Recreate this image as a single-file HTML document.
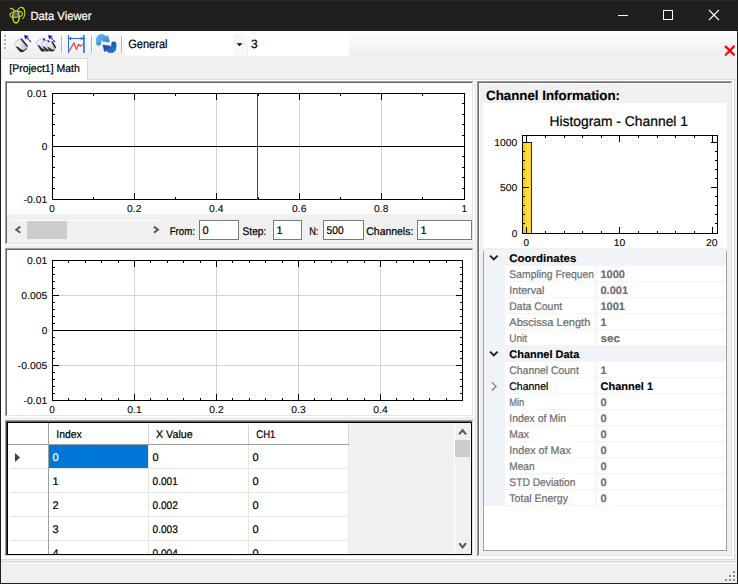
<!DOCTYPE html>
<html><head><meta charset="utf-8"><title>Data Viewer</title>
<style>
html,body{margin:0;padding:0;background:#F0F0F0;overflow:hidden;}
body{width:738px;height:584px;font-family:"Liberation Sans",sans-serif;}
svg{display:block;position:absolute;left:0;top:0;}
svg path, svg ellipse, svg circle, svg g[transform] rect{shape-rendering:geometricPrecision;}
</style></head><body>
<svg width="738" height="584" viewBox="0 0 738 584" shape-rendering="crispEdges" text-rendering="geometricPrecision" font-family="Liberation Sans, sans-serif">
<rect x="0" y="0" width="738" height="584" fill="#F0F0F0" />
<rect x="0" y="0" width="738" height="31" fill="#201F1E" />
<rect x="0" y="0" width="738" height="1" fill="#2B2A29" />
<rect x="0" y="0" width="1" height="584" fill="#201F1E" />
<rect x="737" y="0" width="1" height="584" fill="#201F1E" />
<rect x="0" y="583" width="738" height="1" fill="#201F1E" />
<g fill="none" stroke="#C4D21A" stroke-width="1.1" stroke-linecap="round">
<ellipse cx="16" cy="17" rx="3.2" ry="6.0" stroke-width="1.6" stroke="#C8D61C"/>
<ellipse cx="16.2" cy="14.4" rx="6.3" ry="2.9" transform="rotate(-6 16.2 14.4)"/>
<path d="M10.4 8.4 Q13.6 8.6 14.8 11.6"/>
<path d="M17.6 11.2 C18 6.6 23.4 6 24.5 10.4 C25.2 13.8 24.2 17 22.8 18.6"/>
</g><rect x="14.6" y="13.4" width="3" height="3" fill="#3B34F2" stroke="#9490E4" stroke-width="0.5"/>
<text x="30.5" y="20" font-size="12" fill="#FFFFFF" stroke="#FFFFFF" stroke-width="0.22" text-anchor="start" font-weight="normal"  textLength="61" lengthAdjust="spacingAndGlyphs">Data Viewer</text>
<rect x="618" y="15" width="10" height="1" fill="#FFFFFF" />
<rect x="663.5" y="10.5" width="9" height="9" fill="none" stroke="#FFFFFF" stroke-width="1"/>
<path d="M709 10 L719 20 M719 10 L709 20" stroke="#FFFFFF" stroke-width="1.1" fill="none"/>
<defs><linearGradient id="tb" x1="0" y1="0" x2="0" y2="1"><stop offset="0" stop-color="#FDFDFD"/><stop offset="0.5" stop-color="#F6F6F6"/><stop offset="1" stop-color="#EEEEEE"/></linearGradient></defs>
<rect x="1" y="31" width="736" height="26" fill="url(#tb)" />
<rect x="5" y="36" width="2" height="2" fill="#FFFFFF" />
<rect x="4" y="35" width="2" height="2" fill="#B2B2B2" />
<rect x="5" y="40" width="2" height="2" fill="#FFFFFF" />
<rect x="4" y="39" width="2" height="2" fill="#B2B2B2" />
<rect x="5" y="44" width="2" height="2" fill="#FFFFFF" />
<rect x="4" y="43" width="2" height="2" fill="#B2B2B2" />
<rect x="5" y="48" width="2" height="2" fill="#FFFFFF" />
<rect x="4" y="47" width="2" height="2" fill="#B2B2B2" />
<rect x="61" y="36" width="1" height="17" fill="#B4B4B4" />
<rect x="62" y="36" width="1" height="17" fill="#FCFCFC" />
<rect x="91" y="36" width="1" height="17" fill="#B4B4B4" />
<rect x="92" y="36" width="1" height="17" fill="#FCFCFC" />
<rect x="121" y="36" width="1" height="17" fill="#B4B4B4" />
<rect x="122" y="36" width="1" height="17" fill="#FCFCFC" />
<defs><linearGradient id="pad" x1="0" y1="0" x2="1" y2="1"><stop offset="0" stop-color="#FFFFFF"/><stop offset="0.45" stop-color="#E6E9EB"/><stop offset="1" stop-color="#A8AEB6"/></linearGradient></defs>
<g transform="translate(20.9 45.5) rotate(-40)"><rect x="-4.6" y="-6.0" width="9.2" height="12.0" rx="2.5" fill="url(#pad)" stroke="#B8B2EE" stroke-width="0.8"/><path d="M2.6999999999999997 6.0 L-2.0999999999999996 6.0" fill="none" stroke="#3E3E50" stroke-width="1.15"/><path d="M4.5 -4.4 L4.5 4.3" fill="none" stroke="#2C2C32" stroke-width="1.6" stroke-linecap="round"/><path d="M-4.699999999999999 -2.4 L-4.699999999999999 3.5 Q-4.699999999999999 6.2 -2.0999999999999996 6.2 L-0.5999999999999996 6.2 Q-2.8 3.0 -3.3 -1.4000000000000004 z" fill="#2E2E34"/></g>
<path d="M27.0 37.9 L31.0 41.9" stroke="#1010F0" stroke-width="1.15" stroke-dasharray="2.4 0.7" fill="none"/><path d="M24.099999999999998 35.0 l4.5 1.0 l-3.4 3.4 z" fill="#1010F0"/>
<g transform="translate(42.5 44.9) rotate(-31)"><rect x="-4.3" y="-6.0" width="8.6" height="12.0" rx="2.5" fill="url(#pad)" stroke="#B8B2EE" stroke-width="0.8"/><path d="M2.4 6.0 L-1.7999999999999998 6.0" fill="none" stroke="#3E3E50" stroke-width="1.15"/><path d="M4.2 -4.4 L4.2 4.3" fill="none" stroke="#2C2C32" stroke-width="1.6" stroke-linecap="round"/><path d="M-4.3999999999999995 -2.4 L-4.3999999999999995 3.5 Q-4.3999999999999995 6.2 -1.7999999999999998 6.2 L-0.2999999999999998 6.2 Q-2.5 3.0 -3.0 -1.4000000000000004 z" fill="#2E2E34"/></g>
<g transform="translate(46.9 45.75) rotate(-30)"><rect x="-3.8" y="-5.2" width="7.6" height="10.4" rx="2.5" fill="url(#pad)" stroke="#B8B2EE" stroke-width="0.8"/><path d="M1.9 5.2 L-1.2999999999999998 5.2" fill="none" stroke="#3E3E50" stroke-width="1.15"/><path d="M3.6999999999999997 -3.6 L3.6999999999999997 3.5" fill="none" stroke="#2C2C32" stroke-width="1.6" stroke-linecap="round"/><path d="M-3.9 -1.6 L-3.9 2.7 Q-3.9 5.4 -1.2999999999999998 5.4 L0.20000000000000018 5.4 Q-1.9999999999999998 2.2 -2.5 -0.6000000000000005 z" fill="#2E2E34"/></g>
<g transform="translate(51.0 46.4) rotate(-30)"><rect x="-3.4" y="-4.7" width="6.8" height="9.4" rx="2.5" fill="url(#pad)" stroke="#B8B2EE" stroke-width="0.8"/><path d="M1.5 4.7 L-0.8999999999999999 4.7" fill="none" stroke="#3E3E50" stroke-width="1.15"/><path d="M3.3 -3.1 L3.3 3.0" fill="none" stroke="#2C2C32" stroke-width="1.6" stroke-linecap="round"/><path d="M-3.5 -1.1 L-3.5 2.2 Q-3.5 4.9 -0.8999999999999999 4.9 L0.6000000000000001 4.9 Q-1.5999999999999999 1.7000000000000002 -2.0999999999999996 -0.10000000000000053 z" fill="#2E2E34"/></g>
<path d="M51.0 37.9 L55.0 41.9" stroke="#1010F0" stroke-width="1.15" stroke-dasharray="2.4 0.7" fill="none"/><path d="M48.1 35.0 l4.5 1.0 l-3.4 3.4 z" fill="#1010F0"/>
<rect x="68" y="35" width="1" height="18" fill="#1E6CF0" />
<rect x="83" y="35" width="1" height="18" fill="#2F78F2" />
<rect x="84" y="35" width="1" height="18" fill="#5A98F6" />
<rect x="68" y="38" width="17" height="1" fill="#1E6CF0" />
<path d="M68.6 38.5 l2.6 -2 v4 z M83.4 38.5 l-2.6 -2 v4 z" fill="#1E6CF0"/>
<path d="M68.8 51.7 L74 42.7 L76.2 49.3 L78.7 44.3 L80.3 46.2 L82.6 44.3" stroke="#FF2626" stroke-width="1.1" fill="none" stroke-linejoin="round"/>
<defs><linearGradient id="ra" x1="0" y1="0" x2="1" y2="1"><stop offset="0" stop-color="#6FC0FA"/><stop offset="1" stop-color="#1E78D8"/></linearGradient>
<linearGradient id="rb" x1="0" y1="0" x2="1" y2="1"><stop offset="0" stop-color="#2C84DC"/><stop offset="1" stop-color="#0C3C9A"/></linearGradient></defs>
<path d="M96.3 43.4 Q96.3 45.5 98.6 45.5 Q100.9 45.5 100.9 43.4 L100.9 41.2 Q101 39.7 102.4 39.9 L102.2 41.3 L109.6 42.2 L107.8 35.2 L106.4 36.7 Q103.6 33.8 100 34.5 Q96.3 35.6 96.3 40 Z" fill="url(#ra)" stroke="#3C90E0" stroke-width="0.4"/>
<path d="M96.3 43.4 Q96.3 45.5 98.6 45.5 Q100.9 45.5 100.9 43.4 L100.9 41.2 Q101 39.7 102.4 39.9 L102.2 41.3 L109.6 42.2 L107.8 35.2 L106.4 36.7 Q103.6 33.8 100 34.5 Q96.3 35.6 96.3 40 Z" fill="url(#rb)" stroke="#0E3C96" stroke-width="0.4" transform="rotate(180 106.2 43.6)"/>
<rect x="125" y="32" width="121" height="24" fill="#FFFFFF" />
<rect x="234" y="34" width="11" height="21" fill="#F7F7F7" />
<path d="M236.5 43.2 h6 l-3 3 z" fill="#000"/>
<text x="128.3" y="47.5" font-size="12" fill="#000" stroke="#000" stroke-width="0.22" text-anchor="start" font-weight="normal"  textLength="39.2" lengthAdjust="spacingAndGlyphs">General</text>
<rect x="248" y="33" width="101" height="23" fill="#FFFFFF" />
<text x="251" y="47.5" font-size="12" fill="#000" stroke="#000" stroke-width="0.22" text-anchor="start" font-weight="normal" >3</text>
<rect x="721" y="43" width="15" height="15" fill="#F0F0F0" />
<rect x="736" y="31" width="1" height="27" fill="#FCFCFC" />
<path d="M725.7 46.6 L733.9 54.6 M733.9 46.4 L725.8 54.8" stroke="#F21624" stroke-width="2.3" fill="none" stroke-linecap="round"/>
<path d="M726 46.8 L733.6 54.3 M733.6 46.8 L730.4 50.2" stroke="#9C0008" stroke-width="0.8" fill="none"/>
<rect x="88" y="79" width="647" height="1" fill="#DCDCDC" />
<rect x="1" y="80" width="733" height="479" fill="#FFFFFF" />
<rect x="2" y="559" width="733" height="1" fill="#DADADA" />
<rect x="734" y="79" width="1" height="481" fill="#DADADA" />
<rect x="2" y="58" width="86" height="22" fill="#FFFFFF" />
<rect x="2" y="58" width="86" height="1" fill="#D9D9D9" />
<rect x="87" y="58" width="1" height="22" fill="#D9D9D9" />
<text x="9.3" y="72" font-size="11" fill="#000" stroke="#000" stroke-width="0.22" text-anchor="start" font-weight="normal"  textLength="70.5" lengthAdjust="spacingAndGlyphs">[Project1] Math</text>
<rect x="1" y="561" width="735" height="1" fill="#D7D7D7" />
<rect x="733" y="571" width="2" height="2" fill="#8E8E8E" />
<rect x="729" y="575" width="2" height="2" fill="#8E8E8E" />
<rect x="733" y="575" width="2" height="2" fill="#8E8E8E" />
<rect x="725" y="579" width="2" height="2" fill="#8E8E8E" />
<rect x="729" y="579" width="2" height="2" fill="#8E8E8E" />
<rect x="733" y="579" width="2" height="2" fill="#8E8E8E" />
<rect x="5" y="81" width="728" height="476" fill="#F0F0F0" />
<rect x="5" y="81" width="469" height="164" fill="#FFFFFF" />
<rect x="5" y="81" width="469" height="1" fill="#A0A0A0" />
<rect x="5" y="81" width="1" height="164" fill="#A0A0A0" />
<rect x="6" y="82" width="467" height="1" fill="#696969" />
<rect x="6" y="82" width="1" height="162" fill="#696969" />
<rect x="5" y="244" width="469" height="1" fill="#FFFFFF" />
<rect x="473" y="81" width="1" height="164" fill="#FFFFFF" />
<rect x="6" y="243" width="467" height="1" fill="#E3E3E3" />
<rect x="472" y="82" width="1" height="162" fill="#E3E3E3" />
<rect x="7" y="214" width="465" height="29" fill="#F0F0F0" />
<rect x="134" y="93" width="1" height="107" fill="#D3D3D3" />
<rect x="216" y="93" width="1" height="107" fill="#D3D3D3" />
<rect x="299" y="93" width="1" height="107" fill="#D3D3D3" />
<rect x="381" y="93" width="1" height="107" fill="#D3D3D3" />
<rect x="93" y="93" width="1" height="3" fill="#000" />
<rect x="93" y="197" width="1" height="3" fill="#000" />
<rect x="175" y="93" width="1" height="3" fill="#000" />
<rect x="175" y="197" width="1" height="3" fill="#000" />
<rect x="258" y="93" width="1" height="3" fill="#000" />
<rect x="258" y="197" width="1" height="3" fill="#000" />
<rect x="340" y="93" width="1" height="3" fill="#000" />
<rect x="340" y="197" width="1" height="3" fill="#000" />
<rect x="422" y="93" width="1" height="3" fill="#000" />
<rect x="422" y="197" width="1" height="3" fill="#000" />
<rect x="52" y="93" width="1" height="7" fill="#000" />
<rect x="52" y="193" width="1" height="7" fill="#000" />
<rect x="134" y="93" width="1" height="7" fill="#000" />
<rect x="134" y="193" width="1" height="7" fill="#000" />
<rect x="216" y="93" width="1" height="7" fill="#000" />
<rect x="216" y="193" width="1" height="7" fill="#000" />
<rect x="299" y="93" width="1" height="7" fill="#000" />
<rect x="299" y="193" width="1" height="7" fill="#000" />
<rect x="381" y="93" width="1" height="7" fill="#000" />
<rect x="381" y="193" width="1" height="7" fill="#000" />
<rect x="464" y="93" width="1" height="7" fill="#000" />
<rect x="464" y="193" width="1" height="7" fill="#000" />
<rect x="52" y="93" width="3" height="1" fill="#000" />
<rect x="462" y="93" width="3" height="1" fill="#000" />
<rect x="52" y="103" width="3" height="1" fill="#000" />
<rect x="462" y="103" width="3" height="1" fill="#000" />
<rect x="52" y="114" width="3" height="1" fill="#000" />
<rect x="462" y="114" width="3" height="1" fill="#000" />
<rect x="52" y="124" width="3" height="1" fill="#000" />
<rect x="462" y="124" width="3" height="1" fill="#000" />
<rect x="52" y="135" width="3" height="1" fill="#000" />
<rect x="462" y="135" width="3" height="1" fill="#000" />
<rect x="52" y="146" width="3" height="1" fill="#000" />
<rect x="462" y="146" width="3" height="1" fill="#000" />
<rect x="52" y="156" width="3" height="1" fill="#000" />
<rect x="462" y="156" width="3" height="1" fill="#000" />
<rect x="52" y="167" width="3" height="1" fill="#000" />
<rect x="462" y="167" width="3" height="1" fill="#000" />
<rect x="52" y="177" width="3" height="1" fill="#000" />
<rect x="462" y="177" width="3" height="1" fill="#000" />
<rect x="52" y="188" width="3" height="1" fill="#000" />
<rect x="462" y="188" width="3" height="1" fill="#000" />
<rect x="52" y="199" width="3" height="1" fill="#000" />
<rect x="462" y="199" width="3" height="1" fill="#000" />
<rect x="52" y="146" width="7" height="1" fill="#000" />
<rect x="458" y="146" width="7" height="1" fill="#000" />
<rect x="52" y="93" width="413" height="1" fill="#000" />
<rect x="52" y="199" width="413" height="1" fill="#000" />
<rect x="52" y="93" width="1" height="107" fill="#000" />
<rect x="464" y="93" width="1" height="107" fill="#000" />
<rect x="52" y="146" width="413" height="1" fill="#000" />
<rect x="257" y="93" width="1" height="107" fill="#F00000" />
<text x="47.2" y="97" font-size="10" fill="#000" stroke="#000" stroke-width="0.1" text-anchor="end" font-weight="normal"  textLength="20.14" lengthAdjust="spacingAndGlyphs">0.01</text>
<text x="47.2" y="150" font-size="10" fill="#000" stroke="#000" stroke-width="0.1" text-anchor="end" font-weight="normal" >0</text>
<text x="47.2" y="203" font-size="10" fill="#000" stroke="#000" stroke-width="0.1" text-anchor="end" font-weight="normal"  textLength="23.59" lengthAdjust="spacingAndGlyphs">-0.01</text>
<text x="52" y="212" font-size="10" fill="#000" stroke="#000" stroke-width="0.1" text-anchor="middle" font-weight="normal" >0</text>
<text x="134.3" y="212" font-size="10" fill="#000" stroke="#000" stroke-width="0.1" text-anchor="middle" font-weight="normal"  textLength="14.39" lengthAdjust="spacingAndGlyphs">0.2</text>
<text x="216.3" y="212" font-size="10" fill="#000" stroke="#000" stroke-width="0.1" text-anchor="middle" font-weight="normal"  textLength="14.39" lengthAdjust="spacingAndGlyphs">0.4</text>
<text x="299.3" y="212" font-size="10" fill="#000" stroke="#000" stroke-width="0.1" text-anchor="middle" font-weight="normal"  textLength="14.39" lengthAdjust="spacingAndGlyphs">0.6</text>
<text x="381.3" y="212" font-size="10" fill="#000" stroke="#000" stroke-width="0.1" text-anchor="middle" font-weight="normal"  textLength="14.39" lengthAdjust="spacingAndGlyphs">0.8</text>
<text x="464.3" y="212" font-size="10" fill="#000" stroke="#000" stroke-width="0.1" text-anchor="middle" font-weight="normal" >1</text>
<rect x="10" y="220" width="154" height="1" fill="#FFFFFF" />
<rect x="27" y="221" width="40" height="18" fill="#CDCDCD" />
<path d="M20.3 226.6 L16.3 229.7 L20.3 232.8" stroke="#5A5A5A" stroke-width="2.0" fill="none"/>
<path d="M153.9 226.6 L157.9 229.7 L153.9 232.8" stroke="#5A5A5A" stroke-width="2.0" fill="none"/>
<text x="169.7" y="235" font-size="11" fill="#000" stroke="#000" stroke-width="0.22" text-anchor="start" font-weight="normal"  textLength="25.3" lengthAdjust="spacingAndGlyphs">From:</text>
<rect x="199" y="220" width="40" height="20" fill="#7A7A7A" />
<rect x="200" y="221" width="38" height="18" fill="#FFFFFF" />
<text x="202.6" y="234" font-size="11" fill="#000" stroke="#000" stroke-width="0.22" text-anchor="start" font-weight="normal" >0</text>
<text x="242.5" y="235" font-size="11" fill="#000" stroke="#000" stroke-width="0.22" text-anchor="start" font-weight="normal"  textLength="23.8" lengthAdjust="spacingAndGlyphs">Step:</text>
<rect x="273" y="220" width="29" height="20" fill="#7A7A7A" />
<rect x="274" y="221" width="27" height="18" fill="#FFFFFF" />
<text x="276.6" y="234" font-size="11" fill="#000" stroke="#000" stroke-width="0.22" text-anchor="start" font-weight="normal" >1</text>
<text x="309.2" y="235" font-size="11" fill="#000" stroke="#000" stroke-width="0.22" text-anchor="start" font-weight="normal"  textLength="9.2" lengthAdjust="spacingAndGlyphs">N:</text>
<rect x="323" y="220" width="41" height="20" fill="#7A7A7A" />
<rect x="324" y="221" width="39" height="18" fill="#FFFFFF" />
<text x="326.6" y="234" font-size="11" fill="#000" stroke="#000" stroke-width="0.22" text-anchor="start" font-weight="normal"  textLength="17" lengthAdjust="spacingAndGlyphs">500</text>
<text x="366.3" y="235" font-size="11" fill="#000" stroke="#000" stroke-width="0.22" text-anchor="start" font-weight="normal"  textLength="47" lengthAdjust="spacingAndGlyphs">Channels:</text>
<rect x="417" y="220" width="55" height="20" fill="#7A7A7A" />
<rect x="418" y="221" width="53" height="18" fill="#FFFFFF" />
<text x="420.6" y="234" font-size="11" fill="#000" stroke="#000" stroke-width="0.22" text-anchor="start" font-weight="normal" >1</text>
<rect x="5" y="248" width="469" height="169" fill="#FFFFFF" />
<rect x="5" y="248" width="469" height="1" fill="#A0A0A0" />
<rect x="5" y="248" width="1" height="169" fill="#A0A0A0" />
<rect x="6" y="249" width="467" height="1" fill="#696969" />
<rect x="6" y="249" width="1" height="167" fill="#696969" />
<rect x="5" y="416" width="469" height="1" fill="#FFFFFF" />
<rect x="473" y="248" width="1" height="169" fill="#FFFFFF" />
<rect x="6" y="415" width="467" height="1" fill="#E3E3E3" />
<rect x="472" y="249" width="1" height="167" fill="#E3E3E3" />
<rect x="134" y="260" width="1" height="141" fill="#D3D3D3" />
<rect x="216" y="260" width="1" height="141" fill="#D3D3D3" />
<rect x="298" y="260" width="1" height="141" fill="#D3D3D3" />
<rect x="380" y="260" width="1" height="141" fill="#D3D3D3" />
<rect x="52" y="295" width="411" height="1" fill="#D3D3D3" />
<rect x="52" y="365" width="411" height="1" fill="#D3D3D3" />
<rect x="52" y="260" width="1" height="3" fill="#000" />
<rect x="52" y="398" width="1" height="3" fill="#000" />
<rect x="68" y="260" width="1" height="3" fill="#000" />
<rect x="68" y="398" width="1" height="3" fill="#000" />
<rect x="85" y="260" width="1" height="3" fill="#000" />
<rect x="85" y="398" width="1" height="3" fill="#000" />
<rect x="101" y="260" width="1" height="3" fill="#000" />
<rect x="101" y="398" width="1" height="3" fill="#000" />
<rect x="118" y="260" width="1" height="3" fill="#000" />
<rect x="118" y="398" width="1" height="3" fill="#000" />
<rect x="134" y="260" width="1" height="3" fill="#000" />
<rect x="134" y="398" width="1" height="3" fill="#000" />
<rect x="150" y="260" width="1" height="3" fill="#000" />
<rect x="150" y="398" width="1" height="3" fill="#000" />
<rect x="167" y="260" width="1" height="3" fill="#000" />
<rect x="167" y="398" width="1" height="3" fill="#000" />
<rect x="183" y="260" width="1" height="3" fill="#000" />
<rect x="183" y="398" width="1" height="3" fill="#000" />
<rect x="200" y="260" width="1" height="3" fill="#000" />
<rect x="200" y="398" width="1" height="3" fill="#000" />
<rect x="216" y="260" width="1" height="3" fill="#000" />
<rect x="216" y="398" width="1" height="3" fill="#000" />
<rect x="232" y="260" width="1" height="3" fill="#000" />
<rect x="232" y="398" width="1" height="3" fill="#000" />
<rect x="249" y="260" width="1" height="3" fill="#000" />
<rect x="249" y="398" width="1" height="3" fill="#000" />
<rect x="265" y="260" width="1" height="3" fill="#000" />
<rect x="265" y="398" width="1" height="3" fill="#000" />
<rect x="282" y="260" width="1" height="3" fill="#000" />
<rect x="282" y="398" width="1" height="3" fill="#000" />
<rect x="298" y="260" width="1" height="3" fill="#000" />
<rect x="298" y="398" width="1" height="3" fill="#000" />
<rect x="314" y="260" width="1" height="3" fill="#000" />
<rect x="314" y="398" width="1" height="3" fill="#000" />
<rect x="331" y="260" width="1" height="3" fill="#000" />
<rect x="331" y="398" width="1" height="3" fill="#000" />
<rect x="347" y="260" width="1" height="3" fill="#000" />
<rect x="347" y="398" width="1" height="3" fill="#000" />
<rect x="364" y="260" width="1" height="3" fill="#000" />
<rect x="364" y="398" width="1" height="3" fill="#000" />
<rect x="380" y="260" width="1" height="3" fill="#000" />
<rect x="380" y="398" width="1" height="3" fill="#000" />
<rect x="396" y="260" width="1" height="3" fill="#000" />
<rect x="396" y="398" width="1" height="3" fill="#000" />
<rect x="413" y="260" width="1" height="3" fill="#000" />
<rect x="413" y="398" width="1" height="3" fill="#000" />
<rect x="429" y="260" width="1" height="3" fill="#000" />
<rect x="429" y="398" width="1" height="3" fill="#000" />
<rect x="446" y="260" width="1" height="3" fill="#000" />
<rect x="446" y="398" width="1" height="3" fill="#000" />
<rect x="462" y="260" width="1" height="3" fill="#000" />
<rect x="462" y="398" width="1" height="3" fill="#000" />
<rect x="52" y="260" width="1" height="7" fill="#000" />
<rect x="52" y="394" width="1" height="7" fill="#000" />
<rect x="134" y="260" width="1" height="7" fill="#000" />
<rect x="134" y="394" width="1" height="7" fill="#000" />
<rect x="216" y="260" width="1" height="7" fill="#000" />
<rect x="216" y="394" width="1" height="7" fill="#000" />
<rect x="298" y="260" width="1" height="7" fill="#000" />
<rect x="298" y="394" width="1" height="7" fill="#000" />
<rect x="380" y="260" width="1" height="7" fill="#000" />
<rect x="380" y="394" width="1" height="7" fill="#000" />
<rect x="462" y="260" width="1" height="7" fill="#000" />
<rect x="462" y="394" width="1" height="7" fill="#000" />
<rect x="52" y="260" width="3" height="1" fill="#000" />
<rect x="460" y="260" width="3" height="1" fill="#000" />
<rect x="52" y="267" width="3" height="1" fill="#000" />
<rect x="460" y="267" width="3" height="1" fill="#000" />
<rect x="52" y="274" width="3" height="1" fill="#000" />
<rect x="460" y="274" width="3" height="1" fill="#000" />
<rect x="52" y="281" width="3" height="1" fill="#000" />
<rect x="460" y="281" width="3" height="1" fill="#000" />
<rect x="52" y="288" width="3" height="1" fill="#000" />
<rect x="460" y="288" width="3" height="1" fill="#000" />
<rect x="52" y="295" width="3" height="1" fill="#000" />
<rect x="460" y="295" width="3" height="1" fill="#000" />
<rect x="52" y="302" width="3" height="1" fill="#000" />
<rect x="460" y="302" width="3" height="1" fill="#000" />
<rect x="52" y="309" width="3" height="1" fill="#000" />
<rect x="460" y="309" width="3" height="1" fill="#000" />
<rect x="52" y="316" width="3" height="1" fill="#000" />
<rect x="460" y="316" width="3" height="1" fill="#000" />
<rect x="52" y="323" width="3" height="1" fill="#000" />
<rect x="460" y="323" width="3" height="1" fill="#000" />
<rect x="52" y="330" width="3" height="1" fill="#000" />
<rect x="460" y="330" width="3" height="1" fill="#000" />
<rect x="52" y="337" width="3" height="1" fill="#000" />
<rect x="460" y="337" width="3" height="1" fill="#000" />
<rect x="52" y="344" width="3" height="1" fill="#000" />
<rect x="460" y="344" width="3" height="1" fill="#000" />
<rect x="52" y="351" width="3" height="1" fill="#000" />
<rect x="460" y="351" width="3" height="1" fill="#000" />
<rect x="52" y="358" width="3" height="1" fill="#000" />
<rect x="460" y="358" width="3" height="1" fill="#000" />
<rect x="52" y="365" width="3" height="1" fill="#000" />
<rect x="460" y="365" width="3" height="1" fill="#000" />
<rect x="52" y="372" width="3" height="1" fill="#000" />
<rect x="460" y="372" width="3" height="1" fill="#000" />
<rect x="52" y="379" width="3" height="1" fill="#000" />
<rect x="460" y="379" width="3" height="1" fill="#000" />
<rect x="52" y="386" width="3" height="1" fill="#000" />
<rect x="460" y="386" width="3" height="1" fill="#000" />
<rect x="52" y="393" width="3" height="1" fill="#000" />
<rect x="460" y="393" width="3" height="1" fill="#000" />
<rect x="52" y="400" width="3" height="1" fill="#000" />
<rect x="460" y="400" width="3" height="1" fill="#000" />
<rect x="52" y="260" width="7" height="1" fill="#000" />
<rect x="456" y="260" width="7" height="1" fill="#000" />
<rect x="52" y="295" width="7" height="1" fill="#000" />
<rect x="456" y="295" width="7" height="1" fill="#000" />
<rect x="52" y="330" width="7" height="1" fill="#000" />
<rect x="456" y="330" width="7" height="1" fill="#000" />
<rect x="52" y="365" width="7" height="1" fill="#000" />
<rect x="456" y="365" width="7" height="1" fill="#000" />
<rect x="52" y="400" width="7" height="1" fill="#000" />
<rect x="456" y="400" width="7" height="1" fill="#000" />
<rect x="52" y="260" width="411" height="1" fill="#000" />
<rect x="52" y="400" width="411" height="1" fill="#000" />
<rect x="52" y="260" width="1" height="141" fill="#000" />
<rect x="462" y="260" width="1" height="141" fill="#000" />
<rect x="52" y="330" width="411" height="1" fill="#000" />
<text x="47.2" y="264" font-size="10" fill="#000" stroke="#000" stroke-width="0.1" text-anchor="end" font-weight="normal"  textLength="20.14" lengthAdjust="spacingAndGlyphs">0.01</text>
<text x="47.2" y="299" font-size="10" fill="#000" stroke="#000" stroke-width="0.1" text-anchor="end" font-weight="normal"  textLength="25.9" lengthAdjust="spacingAndGlyphs">0.005</text>
<text x="47.2" y="334" font-size="10" fill="#000" stroke="#000" stroke-width="0.1" text-anchor="end" font-weight="normal" >0</text>
<text x="47.2" y="369" font-size="10" fill="#000" stroke="#000" stroke-width="0.1" text-anchor="end" font-weight="normal"  textLength="29.34" lengthAdjust="spacingAndGlyphs">-0.005</text>
<text x="47.2" y="404" font-size="10" fill="#000" stroke="#000" stroke-width="0.1" text-anchor="end" font-weight="normal"  textLength="23.59" lengthAdjust="spacingAndGlyphs">-0.01</text>
<text x="52" y="413" font-size="10" fill="#000" stroke="#000" stroke-width="0.1" text-anchor="middle" font-weight="normal" >0</text>
<text x="134.5" y="413" font-size="10" fill="#000" stroke="#000" stroke-width="0.1" text-anchor="middle" font-weight="normal"  textLength="14.39" lengthAdjust="spacingAndGlyphs">0.1</text>
<text x="216.5" y="413" font-size="10" fill="#000" stroke="#000" stroke-width="0.1" text-anchor="middle" font-weight="normal"  textLength="14.39" lengthAdjust="spacingAndGlyphs">0.2</text>
<text x="298.5" y="413" font-size="10" fill="#000" stroke="#000" stroke-width="0.1" text-anchor="middle" font-weight="normal"  textLength="14.39" lengthAdjust="spacingAndGlyphs">0.3</text>
<text x="380.5" y="413" font-size="10" fill="#000" stroke="#000" stroke-width="0.1" text-anchor="middle" font-weight="normal"  textLength="14.39" lengthAdjust="spacingAndGlyphs">0.4</text>
<rect x="5" y="420" width="469" height="137" fill="#FFFFFF" />
<rect x="5" y="420" width="469" height="1" fill="#A0A0A0" />
<rect x="5" y="420" width="1" height="136" fill="#A0A0A0" />
<rect x="6" y="421" width="467" height="1" fill="#606060" />
<rect x="6" y="421" width="1" height="134" fill="#404040" />
<rect x="7" y="422" width="465" height="1" fill="#000" />
<rect x="7" y="422" width="1" height="133" fill="#000" />
<rect x="7" y="554" width="465" height="1" fill="#000" />
<rect x="471" y="422" width="1" height="133" fill="#000" />
<rect x="6" y="555" width="468" height="1" fill="#E3E3E3" />
<rect x="472" y="421" width="1" height="135" fill="#E3E3E3" />
<rect x="5" y="556" width="469" height="1" fill="#FFFFFF" />
<rect x="473" y="420" width="1" height="137" fill="#FFFFFF" />
<rect x="349" y="423" width="122" height="131" fill="#F0F0F0" />
<rect x="49" y="445" width="99" height="23" fill="#0078D7" />
<rect x="10" y="468" width="339" height="1" fill="#E6E6E6" />
<rect x="10" y="492" width="339" height="1" fill="#E6E6E6" />
<rect x="10" y="516" width="339" height="1" fill="#E6E6E6" />
<rect x="10" y="540" width="339" height="1" fill="#E6E6E6" />
<rect x="148" y="445" width="1" height="109" fill="#E6E6E6" />
<rect x="148" y="425" width="1" height="19" fill="#D4D4D4" />
<rect x="248" y="445" width="1" height="109" fill="#E6E6E6" />
<rect x="248" y="425" width="1" height="19" fill="#D4D4D4" />
<rect x="348" y="445" width="1" height="109" fill="#E6E6E6" />
<rect x="348" y="425" width="1" height="19" fill="#D4D4D4" />
<rect x="48" y="423" width="1" height="131" fill="#A0A0A0" />
<rect x="8" y="444" width="341" height="1" fill="#A0A0A0" />
<text x="56.3" y="438" font-size="11" fill="#000" stroke="#000" stroke-width="0.22" text-anchor="start" font-weight="normal"  textLength="25.4" lengthAdjust="spacingAndGlyphs">Index</text>
<text x="156" y="438" font-size="11" fill="#000" stroke="#000" stroke-width="0.22" text-anchor="start" font-weight="normal"  textLength="36.7" lengthAdjust="spacingAndGlyphs">X Value</text>
<text x="256.3" y="438" font-size="11" fill="#000" stroke="#000" stroke-width="0.22" text-anchor="start" font-weight="normal"  textLength="19" lengthAdjust="spacingAndGlyphs">CH1</text>
<clipPath id="dg"><rect x="8" y="423" width="341" height="131"/></clipPath><g clip-path="url(#dg)">
<text x="52.6" y="460.7" font-size="11" fill="#FFFFFF" stroke="#FFFFFF" stroke-width="0.22" text-anchor="start" font-weight="normal" >0</text>
<text x="152.6" y="460.7" font-size="11" fill="#000" stroke="#000" stroke-width="0.22" text-anchor="start" font-weight="normal" >0</text>
<text x="252.6" y="460.7" font-size="11" fill="#000" stroke="#000" stroke-width="0.22" text-anchor="start" font-weight="normal" >0</text>
<text x="52.6" y="484.7" font-size="11" fill="#000" stroke="#000" stroke-width="0.22" text-anchor="start" font-weight="normal" >1</text>
<text x="152.6" y="484.7" font-size="11" fill="#000" stroke="#000" stroke-width="0.22" text-anchor="start" font-weight="normal"  textLength="25.2" lengthAdjust="spacingAndGlyphs">0.001</text>
<text x="252.6" y="484.7" font-size="11" fill="#000" stroke="#000" stroke-width="0.22" text-anchor="start" font-weight="normal" >0</text>
<text x="52.6" y="508.7" font-size="11" fill="#000" stroke="#000" stroke-width="0.22" text-anchor="start" font-weight="normal" >2</text>
<text x="152.6" y="508.7" font-size="11" fill="#000" stroke="#000" stroke-width="0.22" text-anchor="start" font-weight="normal"  textLength="25.2" lengthAdjust="spacingAndGlyphs">0.002</text>
<text x="252.6" y="508.7" font-size="11" fill="#000" stroke="#000" stroke-width="0.22" text-anchor="start" font-weight="normal" >0</text>
<text x="52.6" y="532.7" font-size="11" fill="#000" stroke="#000" stroke-width="0.22" text-anchor="start" font-weight="normal" >3</text>
<text x="152.6" y="532.7" font-size="11" fill="#000" stroke="#000" stroke-width="0.22" text-anchor="start" font-weight="normal"  textLength="25.2" lengthAdjust="spacingAndGlyphs">0.003</text>
<text x="252.6" y="532.7" font-size="11" fill="#000" stroke="#000" stroke-width="0.22" text-anchor="start" font-weight="normal" >0</text>
<text x="52.6" y="556.7" font-size="11" fill="#000" stroke="#000" stroke-width="0.22" text-anchor="start" font-weight="normal" >4</text>
<text x="152.6" y="556.7" font-size="11" fill="#000" stroke="#000" stroke-width="0.22" text-anchor="start" font-weight="normal"  textLength="25.2" lengthAdjust="spacingAndGlyphs">0.004</text>
<text x="252.6" y="556.7" font-size="11" fill="#000" stroke="#000" stroke-width="0.22" text-anchor="start" font-weight="normal" >0</text>
</g>
<path d="M15 453 L20 457.5 L15 462 z" fill="#404040"/>
<rect x="454" y="423" width="1" height="131" fill="#FFFFFF" />
<rect x="455" y="440" width="15" height="17" fill="#CDCDCD" />
<path d="M459.2 434.4 L462.6 430.2 L466 434.4" stroke="#5A5A5A" stroke-width="2.1" fill="none"/>
<path d="M459.2 543.2 L462.6 547.4 L466 543.2" stroke="#5A5A5A" stroke-width="2.1" fill="none"/>
<rect x="477" y="81" width="256" height="476" fill="#F0F0F0" />
<rect x="477" y="81" width="256" height="1" fill="#A0A0A0" />
<rect x="477" y="81" width="1" height="476" fill="#A0A0A0" />
<rect x="478" y="82" width="254" height="1" fill="#696969" />
<rect x="478" y="82" width="1" height="474" fill="#696969" />
<rect x="477" y="556" width="256" height="1" fill="#FFFFFF" />
<rect x="732" y="81" width="1" height="476" fill="#FFFFFF" />
<rect x="478" y="555" width="254" height="1" fill="#E3E3E3" />
<rect x="731" y="82" width="1" height="474" fill="#E3E3E3" />
<rect x="479" y="83" width="252" height="1" fill="#FFFFFF" />
<rect x="479" y="83" width="1" height="472" fill="#FFFFFF" />
<text x="486" y="100" font-size="13.33" fill="#000" stroke="#000" stroke-width="0.15" text-anchor="start" font-weight="bold" >Channel Information:</text>
<rect x="483" y="103" width="244" height="145" fill="#FFFFFF" />
<text x="549.4" y="126" font-size="14" fill="#000" stroke="#000" stroke-width="0.22" text-anchor="start" font-weight="normal"  textLength="138.6" lengthAdjust="spacingAndGlyphs">Histogram - Channel 1</text>
<defs><linearGradient id="yb" x1="0" y1="0" x2="1" y2="0"><stop offset="0" stop-color="#F7C600"/><stop offset="0.6" stop-color="#FFE34A"/><stop offset="1" stop-color="#FFD21C"/></linearGradient></defs>
<rect x="523" y="143" width="8" height="90" fill="url(#yb)" />
<rect x="523" y="142" width="9" height="1" fill="#1A1A8C" />
<rect x="531" y="142" width="1" height="91" fill="#1A1A8C" />
<rect x="526" y="135" width="1" height="7" fill="#000" />
<rect x="526" y="227" width="1" height="7" fill="#000" />
<rect x="545" y="135" width="1" height="3" fill="#000" />
<rect x="545" y="231" width="1" height="3" fill="#000" />
<rect x="564" y="135" width="1" height="3" fill="#000" />
<rect x="564" y="231" width="1" height="3" fill="#000" />
<rect x="582" y="135" width="1" height="3" fill="#000" />
<rect x="582" y="231" width="1" height="3" fill="#000" />
<rect x="601" y="135" width="1" height="3" fill="#000" />
<rect x="601" y="231" width="1" height="3" fill="#000" />
<rect x="619" y="135" width="1" height="7" fill="#000" />
<rect x="619" y="227" width="1" height="7" fill="#000" />
<rect x="638" y="135" width="1" height="3" fill="#000" />
<rect x="638" y="231" width="1" height="3" fill="#000" />
<rect x="657" y="135" width="1" height="3" fill="#000" />
<rect x="657" y="231" width="1" height="3" fill="#000" />
<rect x="675" y="135" width="1" height="3" fill="#000" />
<rect x="675" y="231" width="1" height="3" fill="#000" />
<rect x="694" y="135" width="1" height="3" fill="#000" />
<rect x="694" y="231" width="1" height="3" fill="#000" />
<rect x="712" y="135" width="1" height="7" fill="#000" />
<rect x="712" y="227" width="1" height="7" fill="#000" />
<rect x="522" y="223" width="3" height="1" fill="#000" />
<rect x="715" y="223" width="3" height="1" fill="#000" />
<rect x="522" y="214" width="3" height="1" fill="#000" />
<rect x="715" y="214" width="3" height="1" fill="#000" />
<rect x="522" y="205" width="3" height="1" fill="#000" />
<rect x="715" y="205" width="3" height="1" fill="#000" />
<rect x="522" y="196" width="3" height="1" fill="#000" />
<rect x="715" y="196" width="3" height="1" fill="#000" />
<rect x="522" y="187" width="7" height="1" fill="#000" />
<rect x="711" y="187" width="7" height="1" fill="#000" />
<rect x="522" y="178" width="3" height="1" fill="#000" />
<rect x="715" y="178" width="3" height="1" fill="#000" />
<rect x="522" y="169" width="3" height="1" fill="#000" />
<rect x="715" y="169" width="3" height="1" fill="#000" />
<rect x="522" y="160" width="3" height="1" fill="#000" />
<rect x="715" y="160" width="3" height="1" fill="#000" />
<rect x="522" y="151" width="3" height="1" fill="#000" />
<rect x="715" y="151" width="3" height="1" fill="#000" />
<rect x="522" y="142" width="7" height="1" fill="#000" />
<rect x="711" y="142" width="7" height="1" fill="#000" />
<rect x="522" y="135" width="196" height="1" fill="#000" />
<rect x="522" y="233" width="196" height="1" fill="#000" />
<rect x="522" y="135" width="1" height="99" fill="#000" />
<rect x="717" y="135" width="1" height="99" fill="#000" />
<text x="517.3" y="146.0" font-size="10" fill="#000" stroke="#000" stroke-width="0.1" text-anchor="end" font-weight="normal"  textLength="23.02" lengthAdjust="spacingAndGlyphs">1000</text>
<text x="517.3" y="191.0" font-size="10" fill="#000" stroke="#000" stroke-width="0.1" text-anchor="end" font-weight="normal"  textLength="17.26" lengthAdjust="spacingAndGlyphs">500</text>
<text x="517.3" y="236.7" font-size="10" fill="#000" stroke="#000" stroke-width="0.1" text-anchor="end" font-weight="normal" >0</text>
<text x="526.4" y="246" font-size="10" fill="#000" stroke="#000" stroke-width="0.1" text-anchor="middle" font-weight="normal" >0</text>
<text x="619.4" y="246" font-size="10" fill="#000" stroke="#000" stroke-width="0.1" text-anchor="middle" font-weight="normal"  textLength="11.51" lengthAdjust="spacingAndGlyphs">10</text>
<text x="711.8" y="246" font-size="10" fill="#000" stroke="#000" stroke-width="0.1" text-anchor="middle" font-weight="normal"  textLength="11.51" lengthAdjust="spacingAndGlyphs">20</text>
<rect x="483" y="251" width="244" height="300" fill="#A0A0A0" />
<rect x="484" y="250" width="242" height="300" fill="#FFFFFF" />
<rect x="484" y="250" width="21" height="256" fill="#F0F4F9" />
<rect x="484" y="250" width="242" height="16" fill="#F0F4F9" />
<text x="509.3" y="262" font-size="11" fill="#000" stroke="#000" stroke-width="0.15" text-anchor="start" font-weight="bold"  textLength="67" lengthAdjust="spacingAndGlyphs">Coordinates</text>
<path d="M490 255.6 l3.8 3.8 l3.8 -3.8" stroke="#222" stroke-width="1.9" fill="none"/>
<rect x="505" y="281" width="221" height="1" fill="#F0F4F9" />
<rect x="596" y="266" width="1" height="16" fill="#F0F4F9" />
<text x="509.3" y="278" font-size="11" fill="#6D6D6D" stroke="#6D6D6D" stroke-width="0.22" text-anchor="start" font-weight="normal"  textLength="84.8" lengthAdjust="spacingAndGlyphs">Sampling Frequen</text>
<text x="600.5" y="278" font-size="11" fill="#6D6D6D" stroke="#6D6D6D" stroke-width="0.15" text-anchor="start" font-weight="bold" >1000</text>
<rect x="505" y="297" width="221" height="1" fill="#F0F4F9" />
<rect x="596" y="282" width="1" height="16" fill="#F0F4F9" />
<text x="509.3" y="294" font-size="11" fill="#6D6D6D" stroke="#6D6D6D" stroke-width="0.22" text-anchor="start" font-weight="normal"  textLength="35" lengthAdjust="spacingAndGlyphs">Interval</text>
<text x="600.5" y="294" font-size="11" fill="#6D6D6D" stroke="#6D6D6D" stroke-width="0.15" text-anchor="start" font-weight="bold" >0.001</text>
<rect x="505" y="313" width="221" height="1" fill="#F0F4F9" />
<rect x="596" y="298" width="1" height="16" fill="#F0F4F9" />
<text x="509.3" y="310" font-size="11" fill="#6D6D6D" stroke="#6D6D6D" stroke-width="0.22" text-anchor="start" font-weight="normal"  textLength="52.8" lengthAdjust="spacingAndGlyphs">Data Count</text>
<text x="600.5" y="310" font-size="11" fill="#6D6D6D" stroke="#6D6D6D" stroke-width="0.15" text-anchor="start" font-weight="bold" >1001</text>
<rect x="505" y="329" width="221" height="1" fill="#F0F4F9" />
<rect x="596" y="314" width="1" height="16" fill="#F0F4F9" />
<text x="509.3" y="326" font-size="11" fill="#6D6D6D" stroke="#6D6D6D" stroke-width="0.22" text-anchor="start" font-weight="normal"  textLength="81" lengthAdjust="spacingAndGlyphs">Abscissa Length</text>
<text x="600.5" y="326" font-size="11" fill="#6D6D6D" stroke="#6D6D6D" stroke-width="0.15" text-anchor="start" font-weight="bold" >1</text>
<rect x="505" y="345" width="221" height="1" fill="#F0F4F9" />
<rect x="596" y="330" width="1" height="16" fill="#F0F4F9" />
<text x="509.3" y="342" font-size="11" fill="#6D6D6D" stroke="#6D6D6D" stroke-width="0.22" text-anchor="start" font-weight="normal"  textLength="17.8" lengthAdjust="spacingAndGlyphs">Unit</text>
<text x="600.5" y="342" font-size="11" fill="#6D6D6D" stroke="#6D6D6D" stroke-width="0.15" text-anchor="start" font-weight="bold"  textLength="19.5" lengthAdjust="spacingAndGlyphs">sec</text>
<rect x="484" y="346" width="242" height="16" fill="#F0F4F9" />
<text x="509.3" y="358" font-size="11" fill="#000" stroke="#000" stroke-width="0.15" text-anchor="start" font-weight="bold"  textLength="70" lengthAdjust="spacingAndGlyphs">Channel Data</text>
<path d="M490 351.6 l3.8 3.8 l3.8 -3.8" stroke="#222" stroke-width="1.9" fill="none"/>
<rect x="505" y="377" width="221" height="1" fill="#F0F4F9" />
<rect x="596" y="362" width="1" height="16" fill="#F0F4F9" />
<text x="509.3" y="374" font-size="11" fill="#6D6D6D" stroke="#6D6D6D" stroke-width="0.22" text-anchor="start" font-weight="normal"  textLength="69.5" lengthAdjust="spacingAndGlyphs">Channel Count</text>
<text x="600.5" y="374" font-size="11" fill="#6D6D6D" stroke="#6D6D6D" stroke-width="0.15" text-anchor="start" font-weight="bold" >1</text>
<rect x="505" y="393" width="221" height="1" fill="#F0F4F9" />
<rect x="596" y="378" width="1" height="16" fill="#F0F4F9" />
<text x="509.3" y="390" font-size="11" fill="#000" stroke="#000" stroke-width="0.22" text-anchor="start" font-weight="normal"  textLength="39" lengthAdjust="spacingAndGlyphs">Channel</text>
<text x="600.5" y="390" font-size="11" fill="#000" stroke="#000" stroke-width="0.15" text-anchor="start" font-weight="bold" >Channel 1</text>
<path d="M491.8 382.2 l4.2 4.2 l-4.2 4.2" stroke="#909090" stroke-width="1.5" fill="none"/>
<rect x="505" y="409" width="221" height="1" fill="#F0F4F9" />
<rect x="596" y="394" width="1" height="16" fill="#F0F4F9" />
<text x="509.3" y="406" font-size="11" fill="#6D6D6D" stroke="#6D6D6D" stroke-width="0.22" text-anchor="start" font-weight="normal"  textLength="15" lengthAdjust="spacingAndGlyphs">Min</text>
<text x="600.5" y="406" font-size="11" fill="#6D6D6D" stroke="#6D6D6D" stroke-width="0.15" text-anchor="start" font-weight="bold" >0</text>
<rect x="505" y="425" width="221" height="1" fill="#F0F4F9" />
<rect x="596" y="410" width="1" height="16" fill="#F0F4F9" />
<text x="509.3" y="422" font-size="11" fill="#6D6D6D" stroke="#6D6D6D" stroke-width="0.22" text-anchor="start" font-weight="normal"  textLength="56.7" lengthAdjust="spacingAndGlyphs">Index of Min</text>
<text x="600.5" y="422" font-size="11" fill="#6D6D6D" stroke="#6D6D6D" stroke-width="0.15" text-anchor="start" font-weight="bold" >0</text>
<rect x="505" y="441" width="221" height="1" fill="#F0F4F9" />
<rect x="596" y="426" width="1" height="16" fill="#F0F4F9" />
<text x="509.3" y="438" font-size="11" fill="#6D6D6D" stroke="#6D6D6D" stroke-width="0.22" text-anchor="start" font-weight="normal"  textLength="19.5" lengthAdjust="spacingAndGlyphs">Max</text>
<text x="600.5" y="438" font-size="11" fill="#6D6D6D" stroke="#6D6D6D" stroke-width="0.15" text-anchor="start" font-weight="bold" >0</text>
<rect x="505" y="457" width="221" height="1" fill="#F0F4F9" />
<rect x="596" y="442" width="1" height="16" fill="#F0F4F9" />
<text x="509.3" y="454" font-size="11" fill="#6D6D6D" stroke="#6D6D6D" stroke-width="0.22" text-anchor="start" font-weight="normal"  textLength="61.5" lengthAdjust="spacingAndGlyphs">Index of Max</text>
<text x="600.5" y="454" font-size="11" fill="#6D6D6D" stroke="#6D6D6D" stroke-width="0.15" text-anchor="start" font-weight="bold" >0</text>
<rect x="505" y="473" width="221" height="1" fill="#F0F4F9" />
<rect x="596" y="458" width="1" height="16" fill="#F0F4F9" />
<text x="509.3" y="470" font-size="11" fill="#6D6D6D" stroke="#6D6D6D" stroke-width="0.22" text-anchor="start" font-weight="normal"  textLength="25.3" lengthAdjust="spacingAndGlyphs">Mean</text>
<text x="600.5" y="470" font-size="11" fill="#6D6D6D" stroke="#6D6D6D" stroke-width="0.15" text-anchor="start" font-weight="bold" >0</text>
<rect x="505" y="489" width="221" height="1" fill="#F0F4F9" />
<rect x="596" y="474" width="1" height="16" fill="#F0F4F9" />
<text x="509.3" y="486" font-size="11" fill="#6D6D6D" stroke="#6D6D6D" stroke-width="0.22" text-anchor="start" font-weight="normal"  textLength="66.2" lengthAdjust="spacingAndGlyphs">STD Deviation</text>
<text x="600.5" y="486" font-size="11" fill="#6D6D6D" stroke="#6D6D6D" stroke-width="0.15" text-anchor="start" font-weight="bold" >0</text>
<rect x="505" y="505" width="221" height="1" fill="#F0F4F9" />
<rect x="596" y="490" width="1" height="16" fill="#F0F4F9" />
<text x="509.3" y="502" font-size="11" fill="#6D6D6D" stroke="#6D6D6D" stroke-width="0.22" text-anchor="start" font-weight="normal"  textLength="58.7" lengthAdjust="spacingAndGlyphs">Total Energy</text>
<text x="600.5" y="502" font-size="11" fill="#6D6D6D" stroke="#6D6D6D" stroke-width="0.15" text-anchor="start" font-weight="bold" >0</text>
</svg>
</body></html>
